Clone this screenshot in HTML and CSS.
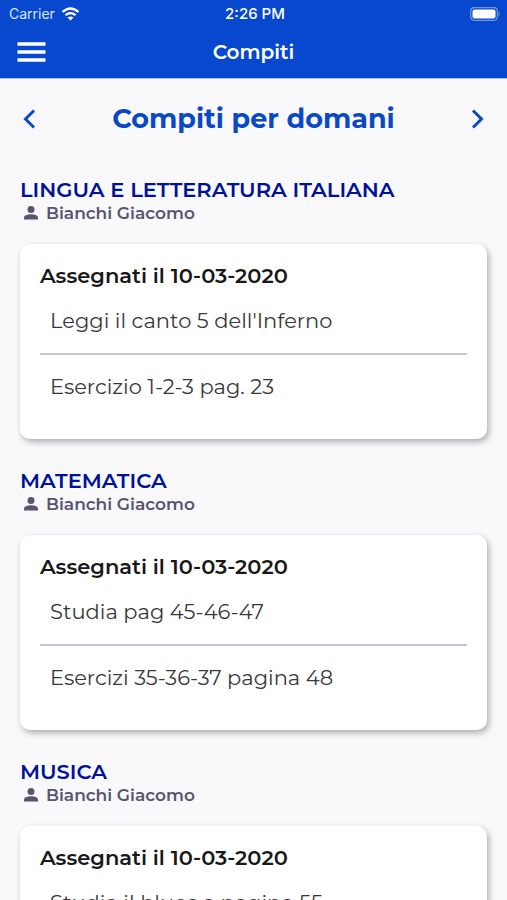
FILE: index.html
```html
<!DOCTYPE html>
<html lang="it">
<head>
<meta charset="utf-8">
<meta name="viewport" content="width=device-width, initial-scale=1">
<title>Compiti</title>
<link rel="stylesheet" href="styles.css">
</head>
<body>
<svg class="defs" aria-hidden="true">
  <symbol id="person" viewBox="0 0 16 16"><circle cx="8" cy="4.500" r="3.500"/><path d="M1 14.500v-2C1 10 5 9.200 8 9.200s7 .8 7 3.300v2z"/></symbol>
</svg>
<div class="app">
  <header class="top">
    <div class="status">
      <span class="carrier">Carrier
        <svg class="wifi" viewBox="0 0 18 14" aria-hidden="true"><path d="M1 5Q9-2 17 5M4 8.200Q9 4 14 8.200" fill="none" stroke="currentColor" stroke-width="2.300"/><path d="M9 13.500 6 10.600Q9 8.300 12 10.600z" fill="currentColor"/></svg>
      </span>
      <span class="time">2:26 PM</span>
      <svg class="battery" viewBox="0 0 31 14" aria-hidden="true"><rect x=".7" y=".7" width="26.600" height="12.600" rx="3.500" fill="none" stroke="#6f97e6" stroke-width="1.200"/><rect x="2.500" y="2.500" width="23" height="9" rx="2" fill="#fff"/><path d="M28.700 4.500q2 2.500 0 5z" fill="#7fa3ea"/></svg>
    </div>
    <div class="bar">
      <button class="menu" type="button" aria-label="Menu"><svg viewBox="0 0 28 20"><path d="M0 2h28M0 10h28M0 18h28" stroke="currentColor" stroke-width="3.300"/></svg></button>
      <h1>Compiti</h1>
    </div>
  </header>
  <main>
    <nav class="day">
      <button type="button" aria-label="Giorno precedente"><svg viewBox="0 0 12 20"><path d="M10.500 1.500 2 10l8.500 8.500"/></svg></button>
      <h2>Compiti per domani</h2>
      <button type="button" aria-label="Giorno successivo"><svg viewBox="0 0 12 20"><path d="M1.500 1.500 10 10l-8.500 8.500"/></svg></button>
    </nav>
    <section>
      <h3>LINGUA E LETTERATURA ITALIANA</h3>
      <p class="teacher"><svg aria-hidden="true"><use href="#person"/></svg>Bianchi Giacomo</p>
      <article class="card">
        <h4>Assegnati il 10-03-2020</h4>
        <ul><li>Leggi il canto 5 dell'Inferno</li><li>Esercizio 1-2-3 pag. 23</li></ul>
      </article>
    </section>
    <section>
      <h3>MATEMATICA</h3>
      <p class="teacher"><svg aria-hidden="true"><use href="#person"/></svg>Bianchi Giacomo</p>
      <article class="card">
        <h4>Assegnati il 10-03-2020</h4>
        <ul><li>Studia pag 45-46-47</li><li>Esercizi 35-36-37 pagina 48</li></ul>
      </article>
    </section>
    <section>
      <h3>MUSICA</h3>
      <p class="teacher"><svg aria-hidden="true"><use href="#person"/></svg>Bianchi Giacomo</p>
      <article class="card">
        <h4>Assegnati il 10-03-2020</h4>
        <ul><li>Studia il blues a pagina 55</li></ul>
      </article>
    </section>
  </main>
</div>
</body>
</html>
```
FILE: styles.css
```css
* { box-sizing: border-box; margin: 0; padding: 0; }
body { font-family: Montserrat, Inter, sans-serif; background: #f9f9fc; color: #38383b; }
button { border: 0; background: none; color: inherit; display: flex; cursor: pointer; }
.defs { display: none; }
.app { height: 100vh; display: flex; flex-direction: column; }
.top { flex: none; background: #0848ce; color: #fff; border-bottom: 1px solid #a9c1f2; }
.status { display: grid; grid-template-columns: 1fr auto 1fr; align-items: center; height: 27px; padding: 0 6px 0 9px; font: 14px/20px Inter, sans-serif; }
.carrier { display: flex; align-items: center; gap: 6px; color: #dce6fa; }
.wifi { width: 19px; height: 14px; color: #fff; }
.time { font-size: 15px; font-weight: 500; }
.battery { width: 31px; height: 14px; justify-self: end; }
.bar { display: grid; grid-template-columns: 1fr auto 1fr; align-items: center; height: 51px; padding: 0 17px 2px; }
.menu svg { width: 29px; height: 20px; }
h1 { font-size: 20px; line-height: 24px; font-weight: 600; }
main { flex: 1; min-height: 0; overflow-y: auto; scrollbar-width: none; padding: 20px 20px 0; }
.day { display: flex; align-items: center; justify-content: space-between; height: 40px; margin-bottom: 39px; padding: 0 3px; color: #0a49c6; }
.day svg { width: 13px; height: 20px; fill: none; stroke: currentColor; stroke-width: 3; }
h2 { font-size: 27px; line-height: 36px; font-weight: 700; }
section { margin-bottom: 30px; }
h3 { color: #001298; font-size: 21px; line-height: 24px; font-weight: 600; }
.teacher { display: flex; align-items: center; gap: 7px; height: 22px; padding-left: 3px; color: #58546f; font-size: 17px; line-height: 22px; font-weight: 600; margin-bottom: 20px; }
.teacher svg { width: 16px; height: 16px; fill: currentColor; }
.card { background: #fff; border-radius: 10px; padding: 20px; box-shadow: 2px 3px 6px #0000004d; }
h4 { color: #18181a; font-size: 21px; line-height: 23px; margin-bottom: 2px; font-weight: 600; }
ul { list-style: none; }
li { padding: 20px 10px; font-size: 21px; line-height: 24px; }
li + li { border-top: 2px solid #c5c3d6; }
```
